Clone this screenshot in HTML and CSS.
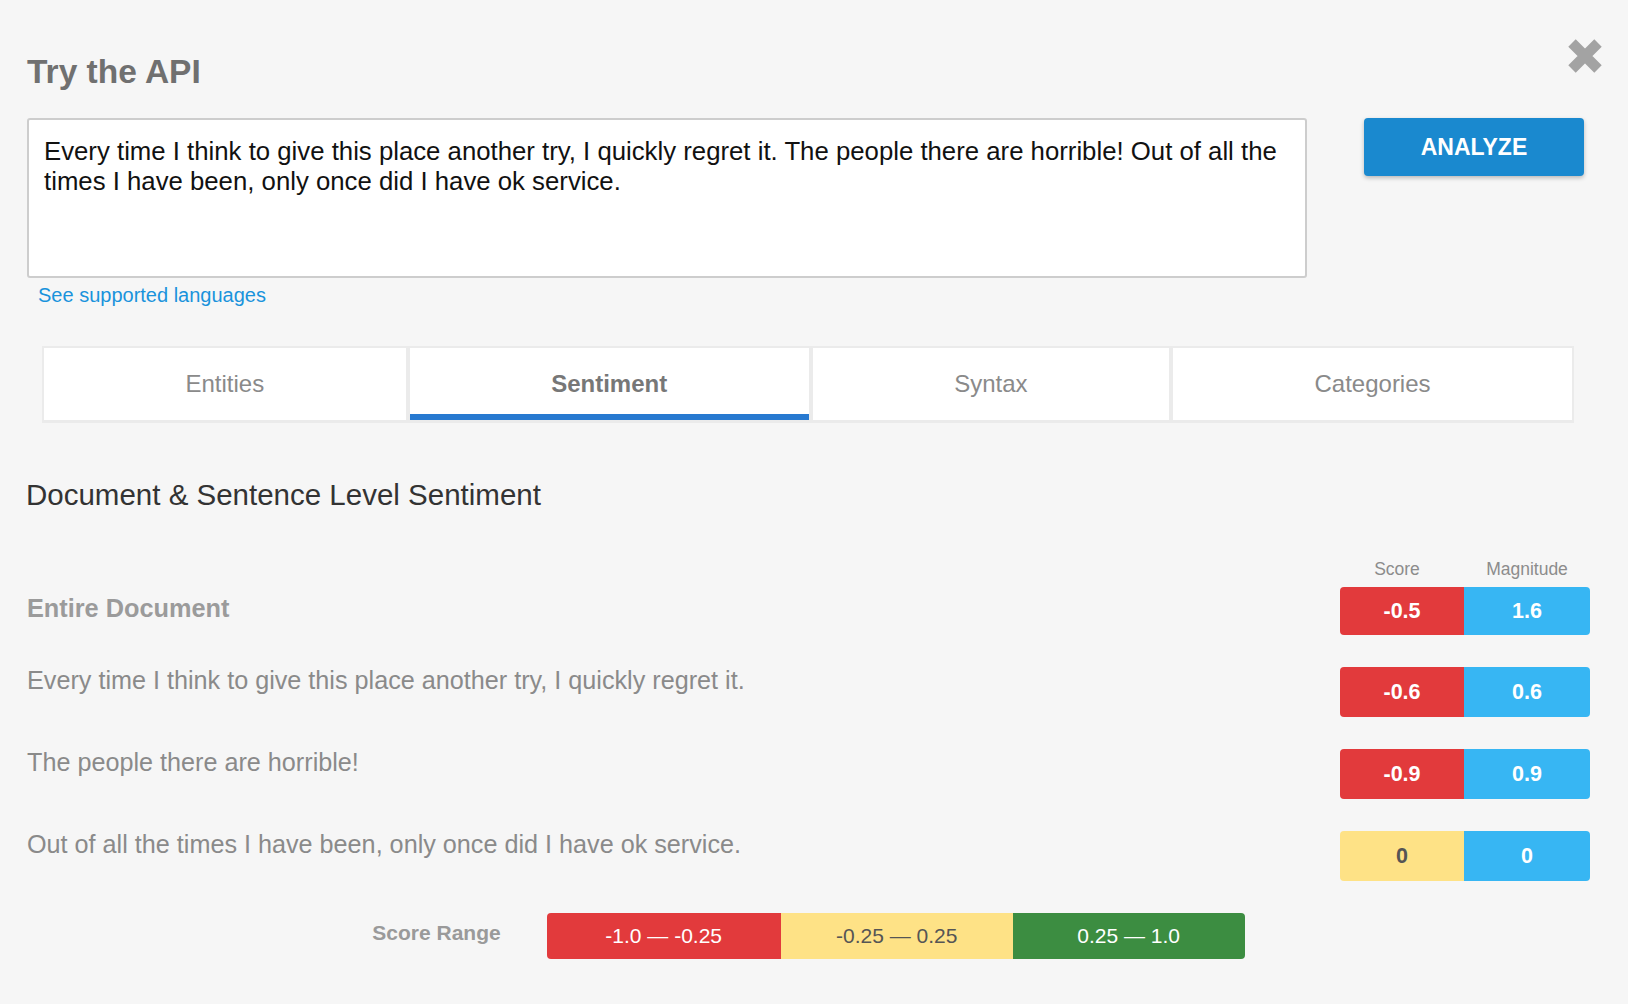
FILE: index.html
```html
<!DOCTYPE html>
<html lang="en">
<head>
<meta charset="utf-8">
<title>Try the API</title>
<link rel="stylesheet" href="styles.css">
</head>
<body>
<div class="modal">
  <header class="head">
    <h1 class="title">Try the API</h1>
    <button class="close" aria-label="Close">
      <svg width="36" height="36" viewBox="0 0 36 36"><path d="M5 5 L31 31 M31 5 L5 31" stroke="#a3a3a3" stroke-width="10.5" fill="none"/></svg>
    </button>
  </header>

  <div class="input-row">
    <div class="input-col">
      <textarea class="input" spellcheck="false">Every time I think to give this place another try, I quickly regret it. The people there are horrible! Out of all the times I have been, only once did I have ok service.</textarea>
      <a class="lang-link" href="#">See supported languages</a>
    </div>
    <button class="analyze">ANALYZE</button>
  </div>

  <nav class="tabs">
    <div class="tab">Entities</div>
    <div class="tab active">Sentiment</div>
    <div class="tab">Syntax</div>
    <div class="tab">Categories</div>
  </nav>

  <h2 class="section-title">Document &amp; Sentence Level Sentiment</h2>

  <div class="results">
    <div class="labels-row">
      <div class="pair labels"><span class="score-label">Score</span><span>Magnitude</span></div>
    </div>
    <div class="rows">
      <div class="row doc-row">
        <div class="row-text doc">Entire Document</div>
        <div class="pair bar"><span class="neg">-0.5</span><span class="mag">1.6</span></div>
      </div>
      <div class="row">
        <div class="row-text">Every time I think to give this place another try, I quickly regret it.</div>
        <div class="pair bar"><span class="neg">-0.6</span><span class="mag">0.6</span></div>
      </div>
      <div class="row">
        <div class="row-text">The people there are horrible!</div>
        <div class="pair bar"><span class="neg">-0.9</span><span class="mag">0.9</span></div>
      </div>
      <div class="row">
        <div class="row-text">Out of all the times I have been, only once did I have ok service.</div>
        <div class="pair bar"><span class="neu">0</span><span class="mag">0</span></div>
      </div>
    </div>
  </div>

  <div class="range">
    <div class="range-label">Score Range</div>
    <div class="range-bar">
      <span class="neg">-1.0 — -0.25</span>
      <span class="neu">-0.25 — 0.25</span>
      <span class="pos">0.25 — 1.0</span>
    </div>
  </div>
</div>
</body>
</html>
```

FILE: styles.css
```css
* { box-sizing: border-box; }

html, body {
  margin: 0;
  background: #f6f6f6;
}

body {
  font-family: "Liberation Sans", Arial, Helvetica, sans-serif;
}

.modal {
  padding: 38px 25px 40px 27px;
}

.head {
  display: flex;
  justify-content: space-between;
  align-items: flex-start;
}

.title {
  margin: 14px 0 0;
  font-size: 33.5px;
  line-height: 40px;
  font-weight: 700;
  color: #707070;
}

.close {
  border: 0;
  background: none;
  padding: 0;
  width: 36px;
  height: 36px;
  display: block;
  cursor: pointer;
}

.close svg { display: block; }

.input-row {
  display: flex;
  align-items: flex-start;
  gap: 57px;
  margin: 26px 19px 0 0;
}

.input-col { flex: 1; }

.input {
  display: block;
  width: 100%;
  height: 160px;
  margin: 0;
  border: 2px solid #cdcdcd;
  border-radius: 3px;
  padding: 16px 14px 14px 15px;
  font-family: "Liberation Sans", Arial, sans-serif;
  font-size: 25.75px;
  line-height: 30px;
  color: #111;
  background: #fff;
  resize: none;
  outline: none;
  overflow: hidden;
}

.lang-link {
  display: inline-block;
  margin: 5px 0 0 11px;
  font-size: 20px;
  line-height: 24px;
  color: #1a93dc;
  text-decoration: none;
}

.analyze {
  width: 220px;
  height: 58px;
  padding: 0;
  border: 0;
  border-radius: 4px;
  background: #1a89cf;
  color: #fff;
  font-family: "Liberation Sans", Arial, sans-serif;
  font-weight: 700;
  font-size: 23px;
  line-height: 58px;
  box-shadow: 0 2px 4px rgba(0, 0, 0, 0.25);
  cursor: pointer;
}

.tabs {
  display: flex;
  gap: 4px;
  padding: 2px 2px 3px;
  background: #ebebeb;
  margin: 39px 29px 0 15px;
}

.tab {
  flex: 1 1 auto;
  height: 72px;
  line-height: 72px;
  text-align: center;
  background: #fff;
  font-size: 24px;
  color: #8a8a8a;
}

.tab.active {
  font-weight: 700;
  color: #777;
  box-shadow: inset 0 -6px 0 #2779d0;
}

.section-title {
  margin: 55px 0 0 -1px;
  font-size: 29.5px;
  line-height: 34px;
  font-weight: 400;
  color: #333;
}

.results {
  margin: 47px 13px 0 0;
}

.labels-row {
  display: flex;
  justify-content: flex-end;
  margin-bottom: 8px;
}

.pair {
  display: grid;
  grid-template-columns: 124px 126px;
}

.labels span {
  text-align: center;
  font-size: 17.5px;
  line-height: 20px;
  color: #8c8c8c;
}

.labels .score-label {
  margin-left: -10px;
}

.rows {
  display: flex;
  flex-direction: column;
  gap: 30px;
}

.row {
  display: flex;
  justify-content: space-between;
  align-items: flex-start;
}

.row-text {
  font-size: 25.2px;
  line-height: 30px;
  color: #8a8a8a;
}

.row .bar {
  margin-top: 2px;
  height: 50px;
}

.doc-row { align-items: center; }

.doc-row .bar {
  margin-top: 0;
  height: 48px;
}

.row-text.doc {
  font-size: 25.3px;
  font-weight: 700;
  color: #9b9b9b;
  margin-bottom: 6px;
}

.bar {
  border-radius: 4px;
  overflow: hidden;
}

.bar span {
  display: flex;
  align-items: center;
  justify-content: center;
  font-size: 21.5px;
  font-weight: 700;
  color: #fff;
}

.neg { background: #e23a3c; }
.mag { background: #37b6f3; }
.neu { background: #fee286; }
.pos { background: #3c8d41; }

.bar .neu { color: #555; }

.range {
  display: flex;
  justify-content: center;
  align-items: center;
  gap: 46px;
  margin: 32px 13px 0 0;
}

.range-label {
  font-size: 21px;
  line-height: 26px;
  font-weight: 700;
  color: #9a9a9a;
  margin-bottom: 6px;
}

.range-bar {
  display: grid;
  grid-template-columns: 234px 232px 232px;
  height: 46px;
  border-radius: 4px;
  overflow: hidden;
}

.range-bar span {
  display: flex;
  align-items: center;
  justify-content: center;
  font-size: 21px;
  color: #fff;
}

.range-bar .neu { color: #555; }
```
